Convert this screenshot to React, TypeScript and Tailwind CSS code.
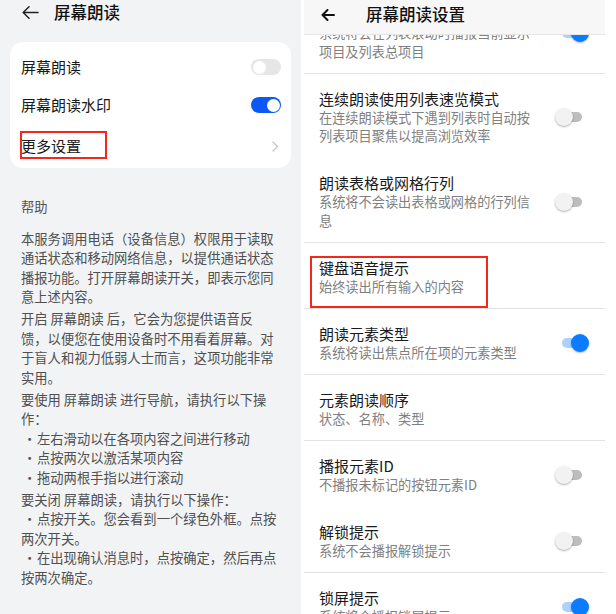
import React from "react";

const FONT = "font-['Noto_Sans_CJK_SC','Noto_Sans',sans-serif]";

function LeftSwitch({ on }: { on: boolean }) {
  return (
    <div className={`relative w-[30px] h-[16px] rounded-full ${on ? "bg-[#0a59f7]" : "bg-[#e6e6e6]"}`}>
      <div
        className={`absolute top-[1.5px] w-[13px] h-[13px] rounded-full bg-white ${on ? "right-[1.5px]" : "left-[1.5px]"}`}
      />
    </div>
  );
}

function RightSwitch({ on }: { on: boolean }) {
  return (
    <div className="relative w-[34px] h-[18px] shrink-0">
      <div
        className={`absolute left-[7px] top-[4px] w-[20px] h-[10px] rounded-full ${on ? "bg-[#aad1ff]" : "bg-[#bdbdbd]"}`}
      />
      <div
        className={`absolute top-0 w-[18px] h-[18px] rounded-full shadow-[0_1px_2px_rgba(0,0,0,0.3)] ${
          on ? "right-0 bg-[#0a7cff]" : "left-0 bg-[#f2f2f2]"
        }`}
      />
    </div>
  );
}

function BackArrow({ bold }: { bold?: boolean }) {
  return bold ? (
    <svg width="14" height="12" viewBox="0 0 14 12" fill="none">
      <path d="M13 6H1.5M6.5 1L1.5 6l5 5" stroke="#111" strokeWidth="2" strokeLinecap="round" strokeLinejoin="round" />
    </svg>
  ) : (
    <svg width="17" height="13" viewBox="0 0 17 13" fill="none">
      <path d="M16 6.5H1.2M7 0.8L1.2 6.5 7 12.2" stroke="#222" strokeWidth="1.5" strokeLinecap="round" strokeLinejoin="round" />
    </svg>
  );
}

type Para = { lines: { text: string; bullet?: boolean }[] };

const help: Para[] = [
  {
    lines: [
      { text: "本服务调用电话（设备信息）权限用于读取" },
      { text: "通话状态和移动网络信息，以提供通话状态" },
      { text: "播报功能。打开屏幕朗读开关，即表示您同" },
      { text: "意上述内容。" },
    ],
  },
  {
    lines: [
      { text: "开启 屏幕朗读 后，它会为您提供语音反" },
      { text: "馈，以便您在使用设备时不用看着屏幕。对" },
      { text: "于盲人和视力低弱人士而言，这项功能非常" },
      { text: "实用。" },
    ],
  },
  {
    lines: [
      { text: "要使用 屏幕朗读 进行导航，请执行以下操" },
      { text: "作：" },
      { text: "左右滑动以在各项内容之间进行移动", bullet: true },
      { text: "点按两次以激活某项内容", bullet: true },
      { text: "拖动两根手指以进行滚动", bullet: true },
    ],
  },
  {
    lines: [
      { text: "要关闭 屏幕朗读，请执行以下操作：" },
      { text: "点按开关。您会看到一个绿色外框。点按", bullet: true },
      { text: "两次开关。" },
      { text: "在出现确认消息时，点按确定，然后再点", bullet: true },
      { text: "按两次确定。" },
    ],
  },
];

type Item = {
  title?: string;
  subs: string[];
  toggle?: boolean;
  divider?: boolean;
  mark?: boolean;
};

// first item is scrolled up under the header, its title is out of view
const items: Item[] = [
  { subs: ["系统将会在列表滚动时播报当前显示", "项目及列表总项目"], toggle: true, divider: true },
  { title: "连续朗读使用列表速览模式", subs: ["在连续朗读模式下遇到列表时自动按", "列表项目聚焦以提高浏览效率"], toggle: false },
  { title: "朗读表格或网格行列", subs: ["系统将不会读出表格或网格的行列信", "息"], toggle: false, divider: true },
  { title: "键盘语音提示", subs: ["始终读出所有输入的内容"], divider: true, mark: true },
  { title: "朗读元素类型", subs: ["系统将读出焦点所在项的元素类型"], toggle: true, divider: true },
  { title: "元素朗读顺序", subs: ["状态、名称、类型"], divider: true },
  { title: "播报元素ID", subs: ["不播报未标记的按钮元素ID"], toggle: false },
  { title: "解锁提示", subs: ["系统不会播报解锁提示"], toggle: false, divider: true },
  { title: "锁屏提示", subs: ["系统将会播报锁屏提示"], toggle: true },
];

function LeftPanel() {
  return (
    <div className="w-[301px] h-full bg-[#f1f3f5] shrink-0">
      <div className="h-[25px] flex items-center pl-[22px]">
        <BackArrow />
        <span className="ml-[15px] text-[16.5px] font-medium text-[#111]">屏幕朗读</span>
      </div>
      <div className="mt-[17px] mx-[10px] bg-white rounded-[13px] pt-[6px]">
        <div className="h-[38px] flex items-center justify-between pl-[11px] pr-[10px]">
          <span className="text-[15px] text-[#191919]">屏幕朗读</span>
          <LeftSwitch on={false} />
        </div>
        <div className="h-[38px] flex items-center justify-between pl-[11px] pr-[10px]">
          <span className="text-[15px] text-[#191919]">屏幕朗读水印</span>
          <LeftSwitch on={true} />
        </div>
        <div className="relative h-[44px] flex items-center justify-between pl-[11px] pr-[12px]">
          <span className="text-[15px] text-[#191919]">更多设置</span>
          <svg width="7" height="11" viewBox="0 0 7 11" fill="none">
            <path d="M1 1l4.5 4.5L1 10" stroke="#c4c4c4" strokeWidth="1.2" strokeLinecap="round" strokeLinejoin="round" />
          </svg>
          <div className="absolute left-[10px] top-[7px] w-[87px] h-[28px] border-2 border-[#f5271d]" />
        </div>
      </div>
      <div className="mt-[29px] px-[21px] text-[13.3px] text-[#555] leading-[20px]">帮助</div>
      <div className="mt-[11.5px] px-[21px] text-[13.3px] text-[#505050] leading-[19.5px]">
        {help.map((p, i) => (
          <div key={i} className={i > 0 ? "mt-[2.5px]" : ""}>
            {p.lines.map((l, j) =>
              l.bullet ? (
                <div key={j} className="flex">
                  <span className="w-[16px] pl-[2px] shrink-0">•</span>
                  <span className="whitespace-pre">{l.text}</span>
                </div>
              ) : (
                <div key={j} className="whitespace-pre">
                  {l.text}
                </div>
              )
            )}
          </div>
        ))}
      </div>
    </div>
  );
}

function RightPanel() {
  return (
    <div className="w-[301px] h-full bg-white flex flex-col shrink-0">
      <div className="h-[35px] shrink-0 bg-[#f7f7f7] border-b border-[#e6e6e6] flex items-center pb-[5px] pl-[17px] relative z-10">
        <BackArrow bold />
        <span className="ml-[31px] text-[16.5px] font-medium text-[#111]">屏幕朗读设置</span>
      </div>
      <div className="flex-1 overflow-hidden">
        <div className="-mt-[46px]">
          {items.map((it, i) => (
            <div
              key={i}
              className={`relative flex items-center justify-between pl-[15px] pr-[16px] pt-[15px] ${
                it.divider ? "border-b border-[#e3e3e3] pb-[11.5px]" : "pb-[12.5px]"
              }`}
            >
              <div>
                {it.title ? (
                  <div className="text-[15px] leading-[20px] text-[#1a1a1a]">{it.title}</div>
                ) : (
                  <div className="h-[20px]" />
                )}
                {it.subs.map((s, j) => (
                  <div key={j} className="text-[13.2px] leading-[18.5px] text-[#808080] whitespace-pre">
                    {s}
                  </div>
                ))}
              </div>
              {it.toggle !== undefined && <RightSwitch on={it.toggle} />}
              {it.mark && <div className="absolute left-[6px] top-[13px] w-[178px] h-[52px] border-2 border-[#f5271d]" />}
            </div>
          ))}
        </div>
      </div>
    </div>
  );
}

export default function App() {
  return (
    <div className={`w-[616px] h-[614px] flex bg-white overflow-hidden ${FONT}`}>
      <LeftPanel />
      <div className="w-[3px] shrink-0" />
      <RightPanel />
    </div>
  );
}
